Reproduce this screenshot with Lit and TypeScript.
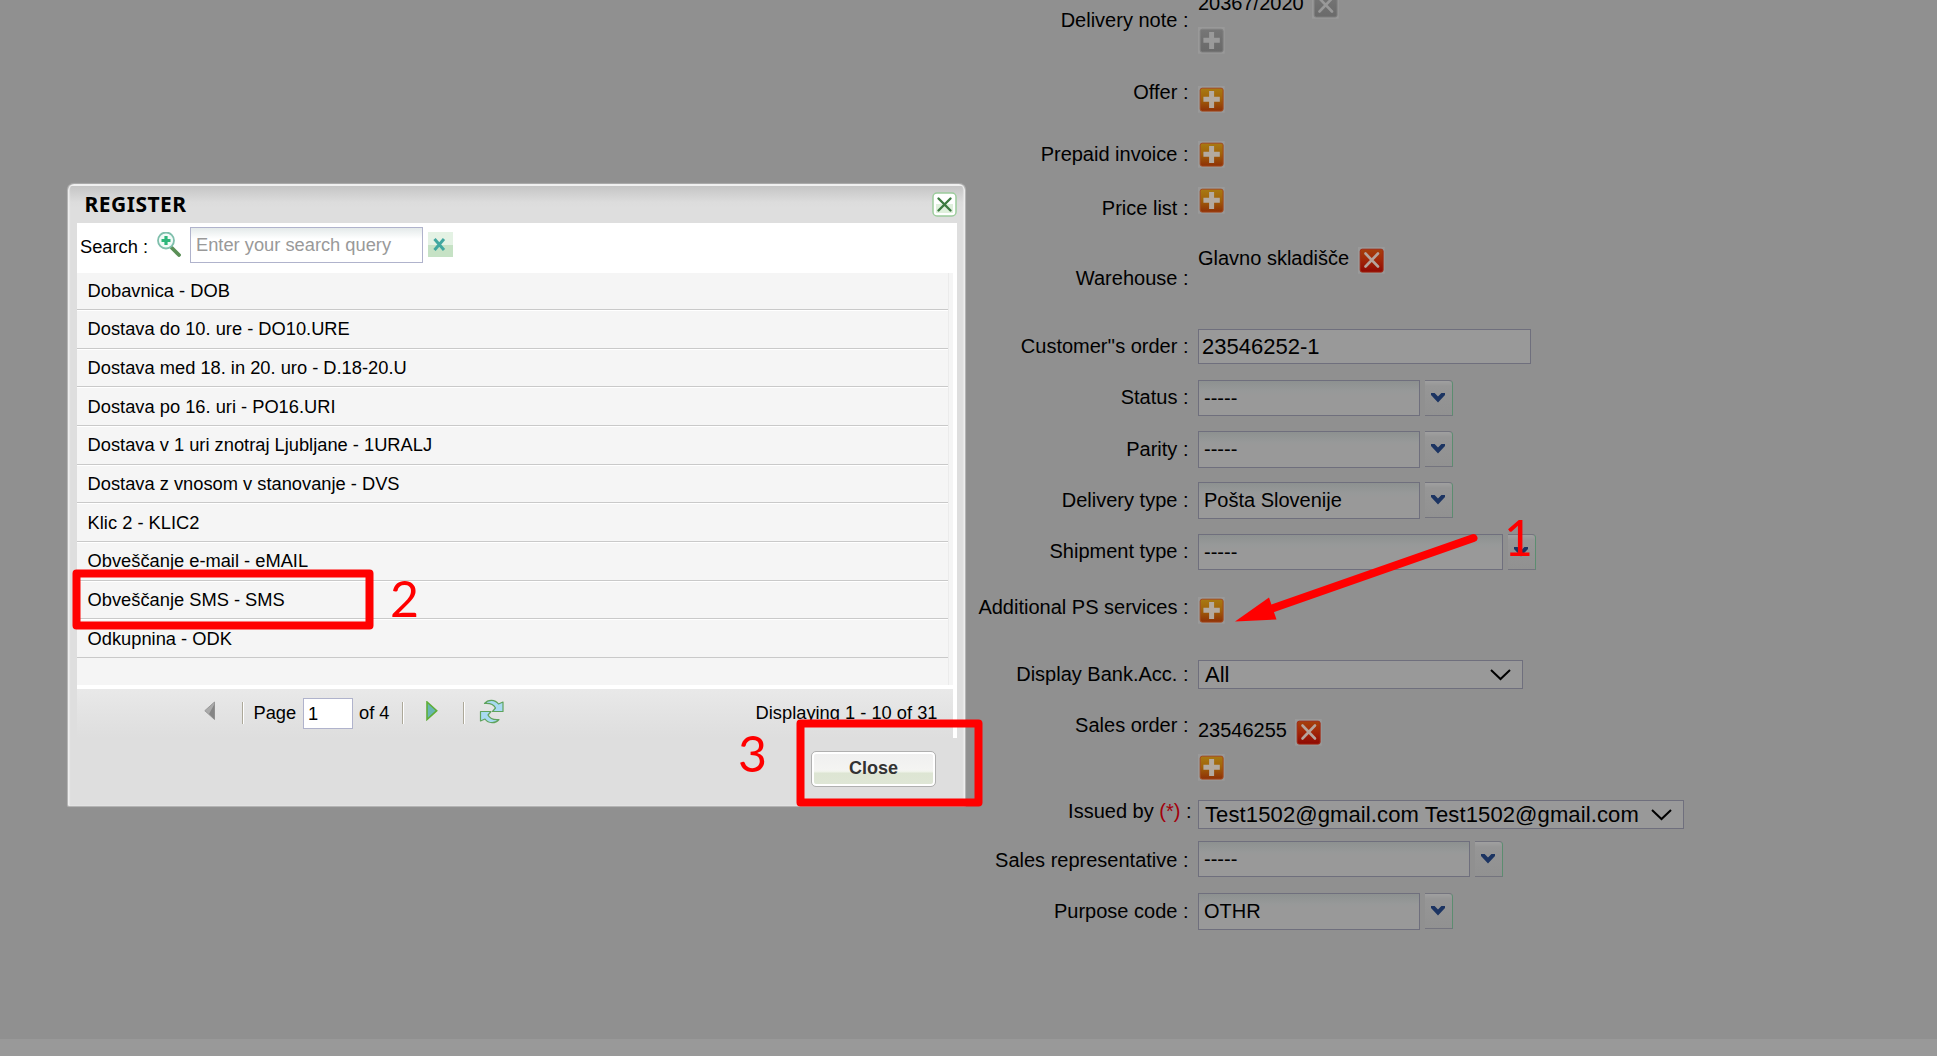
import { LitElement, html, css, svg, TemplateResult } from "lit";
import { customElement, property } from "lit/decorators.js";

type IconKind = "add" | "add-off" | "remove" | "remove-off";

@customElement("row-icon")
class RowIcon extends LitElement {
  @property() kind: IconKind = "add";

  static styles = css`
    :host { display: block; width: 26px; height: 27px; flex: none; }
    svg { display: block; }
  `;

  render() {
    const off = this.kind.endsWith("off");
    const add = this.kind.startsWith("add");
    const top = off ? "#777" : add ? "#a87a12" : "#a5400c";
    const end = off ? "#6a6a6a" : add ? "#8e3006" : "#8f0803";
    const edge = off ? "#808080" : add ? "#a4491c" : "#a22812";
    return html`<svg width="27" height="27" viewBox="0 0 27 27">
      <defs><linearGradient id="g" x1="0" y1="0" x2="0" y2="1">
        <stop offset="0" stop-color=${top}></stop>
        <stop offset="0.45" stop-color=${off ? "#707070" : add ? "#a1630a" : "#a22808"}></stop>
        <stop offset="1" stop-color=${end}></stop>
      </linearGradient></defs>
      <rect width="26.7" height="26.7" fill="#999"></rect>
      <rect x="2.2" y="2.2" width="22.9" height="22.9" rx="2" fill="url(#g)" stroke=${edge} stroke-width="1"></rect>
      ${add
        ? svg`<path d="M13.6 5v17M5.4 13.3h16.4" stroke=${off ? "#9a9a9a" : "#b3aaa0"} stroke-width="5"></path>`
        : svg`<path d="M7.500 6.500l12.500 13M20 6.500l-12.500 13" stroke=${off ? "#999" : "#b5a49c"} stroke-width="2.6" stroke-linecap="round"></path>`}
    </svg>`;
  }
}

@customElement("combo-box")
class ComboBox extends LitElement {
  @property() value = "-----";

  static styles = css`
    :host { display: flex; align-items: flex-start; gap: 5px; height: 36px; }
    .field {
      box-sizing: border-box; width: var(--w, 222px); height: var(--fh, 36px);
      border: 1px solid #6f6f7d; padding-left: 5px; line-height: 34px;
      background: linear-gradient(#8d9190, #979999 10px, #999 14px); white-space: pre;
    }
    .trigger {
      box-sizing: border-box; width: 28px; height: 36px; flex: none;
      border: 1px solid #74747e; border-left: 0; border-right-color: #5c8d70;
      border-radius: 0 4px 0 0; display: flex; justify-content: center;
      background: linear-gradient(#a0a0a0, #969696 5px, #919191);
    }
    svg { display: block; margin: 12px 2px 0 0; }
  `;

  render() {
    return html`<div class="field">${this.value}</div>
      <div class="trigger"><svg width="16" height="10" viewBox="0 0 16 10">
        <path d="M1 0h3.6L8 3.4 11.4 0H15v2L8 9.4 1 2z" fill="#1c3462"></path></svg></div>`;
  }
}

interface FormRow { id: string; label: TemplateResult | string; value: TemplateResult; }

const caret = html`<svg width="22" height="14" viewBox="0 0 22 14"><path d="M1 2l9.500 9 9.500-9" fill="none" stroke="#000" stroke-width="2"></path></svg>`;

const ROWS: FormRow[] = [
  { id: "note", label: "Delivery note :", value: html`<div class="line tall"><span>20367/2020</span><row-icon kind="remove-off"></row-icon></div><row-icon kind="add-off"></row-icon>` },
  { id: "offer", label: "Offer :", value: html`<row-icon></row-icon>` },
  { id: "prepaid", label: "Prepaid invoice :", value: html`<row-icon></row-icon>` },
  { id: "price", label: "Price list :", value: html`<row-icon></row-icon>` },
  { id: "warehouse", label: "Warehouse :", value: html`<div class="line"><span>Glavno skladišče</span><row-icon kind="remove"></row-icon></div>` },
  { id: "customer", label: `Customer''s order :`, value: html`<div class="text-field">23546252-1</div>` },
  { id: "status", label: "Status :", value: html`<combo-box></combo-box>` },
  { id: "parity", label: "Parity :", value: html`<combo-box></combo-box>` },
  { id: "delivery", label: "Delivery type :", value: html`<combo-box value="Pošta Slovenije"></combo-box>` },
  { id: "shipment", label: "Shipment type :", value: html`<combo-box></combo-box>` },
  { id: "services", label: "Additional PS services :", value: html`<row-icon></row-icon>` },
  { id: "bank", label: "Display Bank.Acc. :", value: html`<div class="select"><span>All</span>${caret}</div>` },
  { id: "sales", label: "Sales order :", value: html`<div class="line tall"><span>23546255</span><row-icon kind="remove"></row-icon></div><row-icon></row-icon>` },
  { id: "issued", label: html`Issued by <span class="req">(*)</span> :`, value: html`<div class="select wide"><span>Test1502@gmail.com Test1502@gmail.com</span>${caret}</div>` },
  { id: "rep", label: "Sales representative :", value: html`<combo-box></combo-box>` },
  { id: "purpose", label: "Purpose code :", value: html`<combo-box value="OTHR"></combo-box>` },
];

@customElement("order-form")
class OrderForm extends LitElement {
  static styles = css`
    :host { display: block; height: 1039px; background: #909090; overflow: hidden; }
    .row { display: grid; grid-template-columns: 1188.5px 1fr; column-gap: 9.5px; height: var(--h); box-sizing: border-box; }
    .label { text-align: right; line-height: 24px; padding-top: var(--l); white-space: pre; }
    .value { margin-top: var(--v); line-height: 24px; }
    .line { display: flex; align-items: flex-start; gap: 8.5px; height: 27px; }
    .line row-icon { margin-top: 1px; }
    .line.tall { height: 36px; }
    .text-field { box-sizing: border-box; width: 333px; height: 35px; border: 1px solid #6f6f7d; background: #999; font-size: 22px; line-height: 33px; padding-left: 3px; }
    .select { box-sizing: border-box; display: flex; justify-content: space-between; align-items: center; width: 325px; height: 29px; border: 1px solid #6f6f7d; background: #999; font-size: 22px; line-height: 27px; padding: 0 10px 0 6px; white-space: pre; }
    .select.wide { width: 486px; letter-spacing: 0.12px; }
    .select svg { flex: none; }
    .req { color: #a3000b; }
    .note { --h: 75px; --l: 8px; --v: -9px; }
    .offer { --h: 60px; --l: 5px; --v: 11px; }
    .prepaid { --h: 45px; --l: 7px; --v: 6px; }
    .price { --h: 55px; --l: 16px; --v: 7px; }
    .warehouse { --h: 85px; --l: 31px; --v: 11px; }
    .customer { --h: 52px; --l: 14px; --v: 9px; }
    .status { --h: 52px; --l: 13px; --v: 8px; }
    .parity { --h: 51px; --l: 13px; --v: 7px; --fh: 37px; }
    .delivery { --h: 52px; --l: 13px; --v: 7px; --fh: 37px; }
    .shipment { --h: 53px; --l: 12px; --v: 7px; --w: 305px; }
    .services { --h: 65px; --l: 15px; --v: 17px; }
    .bank { --h: 55px; --l: 17px; --v: 15px; }
    .sales { --h: 90px; --l: 13px; --v: 18px; }
    .issued { --h: 45px; --l: 9px; --v: 10px; }
    .issued .label { margin-right: -3px; }
    .rep { --h: 52px; --l: 13px; --v: 6px; --w: 272px; }
    .purpose { --h: 60px; --l: 12px; --v: 6px; --fh: 37px; }
  `;

  render() {
    return ROWS.map((r) => html`<div class="row ${r.id}"><div class="label">${r.label}</div><div class="value">${r.value}</div></div>`);
  }
}

const SERVICES = [
  "Dobavnica - DOB",
  "Dostava do 10. ure - DO10.URE",
  "Dostava med 18. in 20. uro - D.18-20.U",
  "Dostava po 16. uri - PO16.URI",
  "Dostava v 1 uri znotraj Ljubljane - 1URALJ",
  "Dostava z vnosom v stanovanje - DVS",
  "Klic 2 - KLIC2",
  "Obveščanje e-mail - eMAIL",
  "Obveščanje SMS - SMS",
  "Odkupnina - ODK",
];

@customElement("register-dialog")
class RegisterDialog extends LitElement {
  static styles = css`
    :host {
      display: flex; flex-direction: column; box-sizing: border-box; width: 899px; height: 624px;
      border: 1px solid #b4b4b4; border-top-color: #aaa; border-radius: 7px 7px 2px 2px; padding: 0 8px 0 9px; font-size: 18.3px;
      background: linear-gradient(#f0f0f0 0 1.5px, #c6c6c6 2.5px, #cfcfcf 9px, #dcdcdc 18px, #dedede 24px);
      box-shadow: inset 1.5px 0 1px #eee, inset -1.5px 0 1px #eee, 0 0 1px #aaa;
    }
    .head { display: flex; justify-content: space-between; height: 39px; flex: none; }
    .title { font: bold 21px/26px "Noto Sans", "DejaVu Sans", sans-serif; color: #000; margin: 7px 0 0 7.5px; letter-spacing: 0.5px; }
    .head svg { margin-top: 8px; }
    .search { display: flex; background: #fff; height: 50px; flex: none; }
    .search .cap { margin: 13px 0 0 3px; width: 77px; line-height: 22px; white-space: pre; }
    .search .lens { margin-top: 9px; }
    .query { box-sizing: border-box; margin: 4px 5px 0 9px; width: 233px; height: 36px; border: 1px solid #b0b3cc; padding-left: 5px; line-height: 34px; color: #999; background: linear-gradient(#e4eaea, #fff 11px); }
    .search .clear { margin-top: 9px; }
    .list { display: flex; height: 412px; flex: none; background: #fff; }
    .items { width: 872px; background: #f5f5f5; border-right: 1px solid #ebebeb; box-sizing: border-box; }
    .item { box-sizing: border-box; height: 38.67px; border-bottom: 1px solid #c9c9c9; border-top: 1px solid #fff; padding: 7.4px 0 0 10.6px; line-height: 22px; white-space: pre; }
    .item:first-child { height: 37px; border-top: 0; padding-top: 7px; }
    .strip { width: 4px; background: #f5f5f5; }
    .pager { display: flex; box-sizing: border-box; height: 53px; flex: none; border-top: 4px solid #fff; border-right: 4px solid #fff; background: linear-gradient(#e9e9e9, #e3e3e3 50%, #dedede); line-height: 22px; white-space: pre; }
    .pager .prev { margin: 12px 26px 0 127px; }
    .sep { width: 1px; height: 22px; margin-top: 13px; background: #aca899; border-right: 1px solid #fff; flex: none; }
    .pager .page { margin: 13px 0 0 9.5px; width: 49.5px; }
    .num { box-sizing: border-box; width: 50px; height: 31px; margin-top: 9px; border: 1px solid #b0b3cc; background: #fff; padding-left: 4px; line-height: 29px; }
    .pager .of { margin: 13px 0 0 6px; width: 43px; }
    .pager .next { margin: 12px 25px 0 22px; }
    .pager .refresh { margin: 10px 0 0 14px; }
    .pager .total { margin: 13px 15.5px 0 auto; }
    .foot { display: flex; justify-content: flex-end; padding: 13px 21px 0 0; }
    .close { box-sizing: border-box; width: 125px; height: 36px; border: 1px solid #b0b0b0; border-radius: 5px; box-shadow: inset 0 0 0 2px #fff; background: linear-gradient(#efefef, #f4f4f2 18px, #eef2e8 20px, #dde5d3 21px, #dfe6d6); color: #333; font-weight: bold; font-size: 18px; line-height: 32px; text-align: center; }
    svg { display: block; flex: none; }
  `;

  render() {
    return html`
      <div class="head"><div class="title">REGISTER</div>
        <svg width="25" height="25" viewBox="0 0 25 25"><rect x="1" y="1" width="23" height="23" rx="4" fill="#fff" stroke="#9ccc9c" stroke-width="1.5"></rect>
          <path d="M4 12h17v9H4z" fill="#dff0dc"></path>
          <path d="M6.500 6.500l12 12M18.500 6.500l-12 12" stroke="#3c7a40" stroke-width="2.4" stroke-linecap="round"></path></svg></div>
      <div class="search"><div class="cap">Search :</div>
        <svg class="lens" width="24" height="25" viewBox="0 0 24 25">
          <path d="M15 16l7 7" stroke="#5a8f56" stroke-width="3.800" stroke-linecap="round"></path>
          <circle cx="9" cy="8.500" r="8" fill="#f2fbf8" stroke="#7fbfac" stroke-width="1.800"></circle>
          <path d="M9 4v9M4.500 8.500h9" stroke="#2eb67b" stroke-width="3.200"></path></svg>
        <div class="query">Enter your search query</div>
        <svg class="clear" width="25" height="25" viewBox="0 0 25 25"><rect width="25" height="25" fill="#e4f2e4"></rect><rect y="13" width="25" height="12" fill="#c6e2c5"></rect>
          <path d="M6.500 7l9.500 11M16 7l-9.500 11" stroke="#41a7a0" stroke-width="3"></path></svg></div>
      <div class="list"><div class="items">${SERVICES.map((s) => html`<div class="item">${s}</div>`)}</div><div class="strip"></div></div>
      <div class="pager">
        <svg class="prev" width="12" height="20" viewBox="0 0 12 20"><path d="M10.500 1v17.500L.8 9.700z" fill="#aaa" stroke="#999"></path><path d="M10.500 3v15.500L5 13z" fill="#858585"></path></svg>
        <div class="sep"></div><div class="page">Page</div><div class="num">1</div><div class="of">of 4</div><div class="sep"></div>
        <svg class="next" width="12" height="20" viewBox="0 0 12 20"><path d="M1 1v17.500l9.700-8.800z" fill="#68b5b4" stroke="#5fae38" stroke-width="1.600"></path></svg>
        <div class="sep"></div>
        <svg class="refresh" width="26" height="26" viewBox="0 0 26 26">
          <g fill="#a8daf2" stroke="#5fa35c" stroke-width="1.200" stroke-linejoin="round">
            <path d="M5.500 4.500C9 .2 16 .2 19.500 5L24 3v9.500H13.500L16.500 9C14.500 5 10.500 4 5.500 4.500z"></path>
            <path d="M20 20.500C16.500 24.800 9.500 24.800 6 20L1.500 22V12.500H12L9 16c2 4 6 5 11 4.500z"></path></g></svg>
        <div class="total">Displaying 1 - 10 of 31</div></div>
      <div class="foot"><div class="close">Close</div></div>`;
  }
}

@customElement("app-root")
class AppRoot extends LitElement {
  static styles = css`
    :host { display: block; position: relative; width: 1937px; height: 1056px; overflow: hidden; background: #999; color: #000; font-family: "Liberation Sans", Arial, sans-serif; font-size: 20px; }
    register-dialog { position: absolute; left: 67px; top: 183px; }
    .marks { position: absolute; left: 0; top: 0; pointer-events: none; }
    .digit { font-family: Lato, sans-serif; font-size: 50px; fill: #f00; }
  `;

  render() {
    return html`<order-form></order-form>
      <register-dialog></register-dialog>
      <svg class="marks" width="1937" height="1056">
        <g fill="none" stroke="#f00" stroke-width="8" stroke-linejoin="round">
          <rect x="76.500" y="573.500" width="293" height="52"></rect>
          <rect x="800.500" y="723.500" width="178" height="79"></rect>
          <path d="M1473.500 538L1268 610" stroke-linecap="round"></path>
        </g>
        <path d="M1235 621.500L1269 597.500L1276.500 619.500z" fill="#f00"></path>
        <text class="digit" x="1504" y="556">1</text>
        <text class="digit" x="390" y="617">2</text>
        <text class="digit" x="738" y="772">3</text>
      </svg>`;
  }
}
